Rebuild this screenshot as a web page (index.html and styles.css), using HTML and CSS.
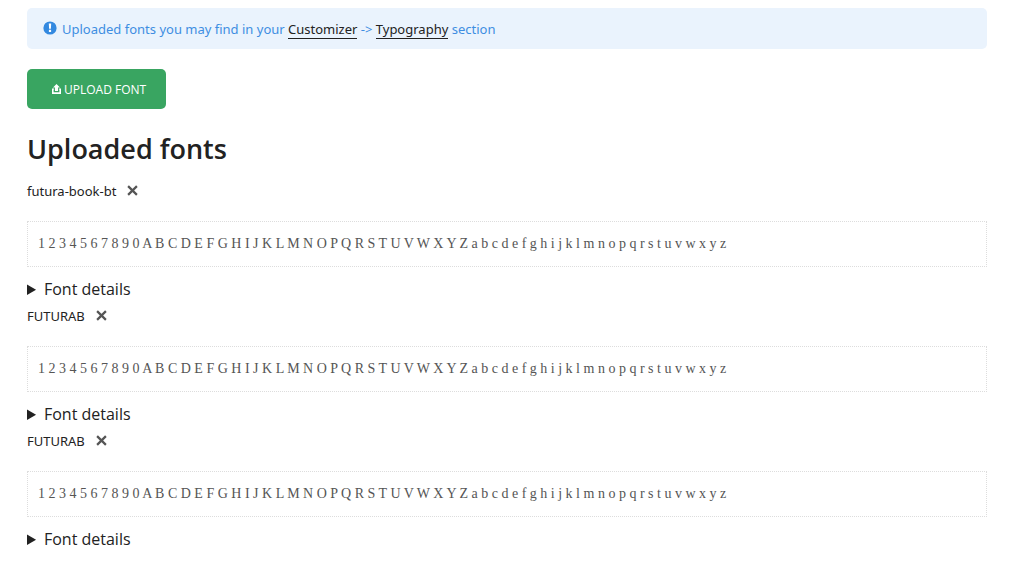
FILE: index.html
```html
<!DOCTYPE html>
<html lang="en">
<head>
<meta charset="utf-8">
<title>Uploaded fonts</title>
<link rel="stylesheet" href="styles.css">
</head>
<body>
<main class="page">
  <div class="notice">
    <svg class="notice-icon" viewBox="0 0 14 14" aria-hidden="true"><circle cx="7" cy="7" r="6.6" fill="#3389e0"/><path d="M5.8 2.6h2.4l-.3 5.2H6.1zM5.9 8.8h2.2V11H5.9z" fill="#fff"/></svg>
    <p class="notice-text">Uploaded fonts you may find in your <a class="link" href="#customizer">Customizer</a> -&gt; <a class="link" href="#typography">Typography</a> section</p>
  </div>
  <button class="upload" type="button">
    <svg class="upload-icon" viewBox="0 0 9 10" aria-hidden="true"><path d="M4.500 0L8 3.600H6V7H3V3.600H1zM0 4.400h2.200v1.200H1.600v2.600h5.800V5.600H6.800V4.400H9V10H0z" fill="#fff"/></svg>
    <span>UPLOAD FONT</span>
  </button>
  <h1 class="title">Uploaded fonts</h1>

  <section class="font">
    <div class="font-head"><span>futura-book-bt</span><button class="remove" type="button" aria-label="Remove futura-book-bt"><svg class="remove-icon" viewBox="0 0 10 10" aria-hidden="true"><path d="M1 1l8 8M9 1L1 9" stroke="#555" stroke-width="2"/></svg></button></div>
    <p class="sample">1 2 3 4 5 6 7 8 9 0 A B C D E F G H I J K L M N O P Q R S T U V W X Y Z a b c d e f g h i j k l m n o p q r s t u v w x y z</p>
    <details class="details"><summary class="summary">Font details</summary></details>
  </section>
  <section class="font">
    <div class="font-head"><span>FUTURAB</span><button class="remove" type="button" aria-label="Remove FUTURAB"><svg class="remove-icon" viewBox="0 0 10 10" aria-hidden="true"><path d="M1 1l8 8M9 1L1 9" stroke="#555" stroke-width="2"/></svg></button></div>
    <p class="sample">1 2 3 4 5 6 7 8 9 0 A B C D E F G H I J K L M N O P Q R S T U V W X Y Z a b c d e f g h i j k l m n o p q r s t u v w x y z</p>
    <details class="details"><summary class="summary">Font details</summary></details>
  </section>
  <section class="font">
    <div class="font-head"><span>FUTURAB</span><button class="remove" type="button" aria-label="Remove FUTURAB"><svg class="remove-icon" viewBox="0 0 10 10" aria-hidden="true"><path d="M1 1l8 8M9 1L1 9" stroke="#555" stroke-width="2"/></svg></button></div>
    <p class="sample">1 2 3 4 5 6 7 8 9 0 A B C D E F G H I J K L M N O P Q R S T U V W X Y Z a b c d e f g h i j k l m n o p q r s t u v w x y z</p>
    <details class="details"><summary class="summary">Font details</summary></details>
  </section>
</main>
</body>
</html>
```
FILE: styles.css
```css
body {
  margin: 0;
  background: #fff;
  color: #222;
  font-family: "Segoe UI", "Noto Sans", "Open Sans", sans-serif;
  font-size: 13px;
  line-height: 21px;
}
.page {
  padding: 8px 26px 20px 27px;
}
.notice {
  display: flex;
  align-items: flex-start;
  gap: 5px;
  padding: 11px 16px 9px;
  border-radius: 5px;
  background: #eaf3fd;
  color: #3e8ee2;
}
.notice-icon {
  width: 14px;
  height: 14px;
  margin-top: 2px;
}
.notice-text {
  margin: 0;
}
.link {
  color: #222;
  text-decoration: none;
  border-bottom: 1px solid #222;
}
.upload {
  display: flex;
  align-items: center;
  gap: 3px;
  height: 40px;
  margin: 20px 0 22px;
  padding: 0 20px 0 25px;
  border: 0;
  border-radius: 5px;
  background: #39a561;
  color: #fff;
  font-family: "Segoe UI", "Open Sans", sans-serif;
  font-size: 12px;
}
.upload-icon {
  width: 9px;
  height: 10px;
}
.title {
  margin: 0 0 14px;
  font-family: "Segoe UI", "Open Sans", sans-serif;
  font-size: 27px;
  line-height: 36px;
  font-weight: 600;
}
.font-head {
  display: flex;
  align-items: center;
  gap: 11px;
  height: 20px;
}
.remove {
  display: flex;
  padding: 0 0 2px;
  border: 0;
  background: none;
}
.remove-icon {
  width: 11px;
  height: 11px;
}
.sample {
  margin: 20px 0 8px;
  padding: 10px;
  border: 1px dotted #ddd;
  color: #555;
  font-family: "Times New Roman", "Liberation Serif", serif;
  font-size: 14px;
  line-height: 24px;
}
.details {
  padding-bottom: 3px;
}
.summary {
  font-family: "Segoe UI", "Open Sans", sans-serif;
  font-size: 16px;
  line-height: 28px;
}
```
